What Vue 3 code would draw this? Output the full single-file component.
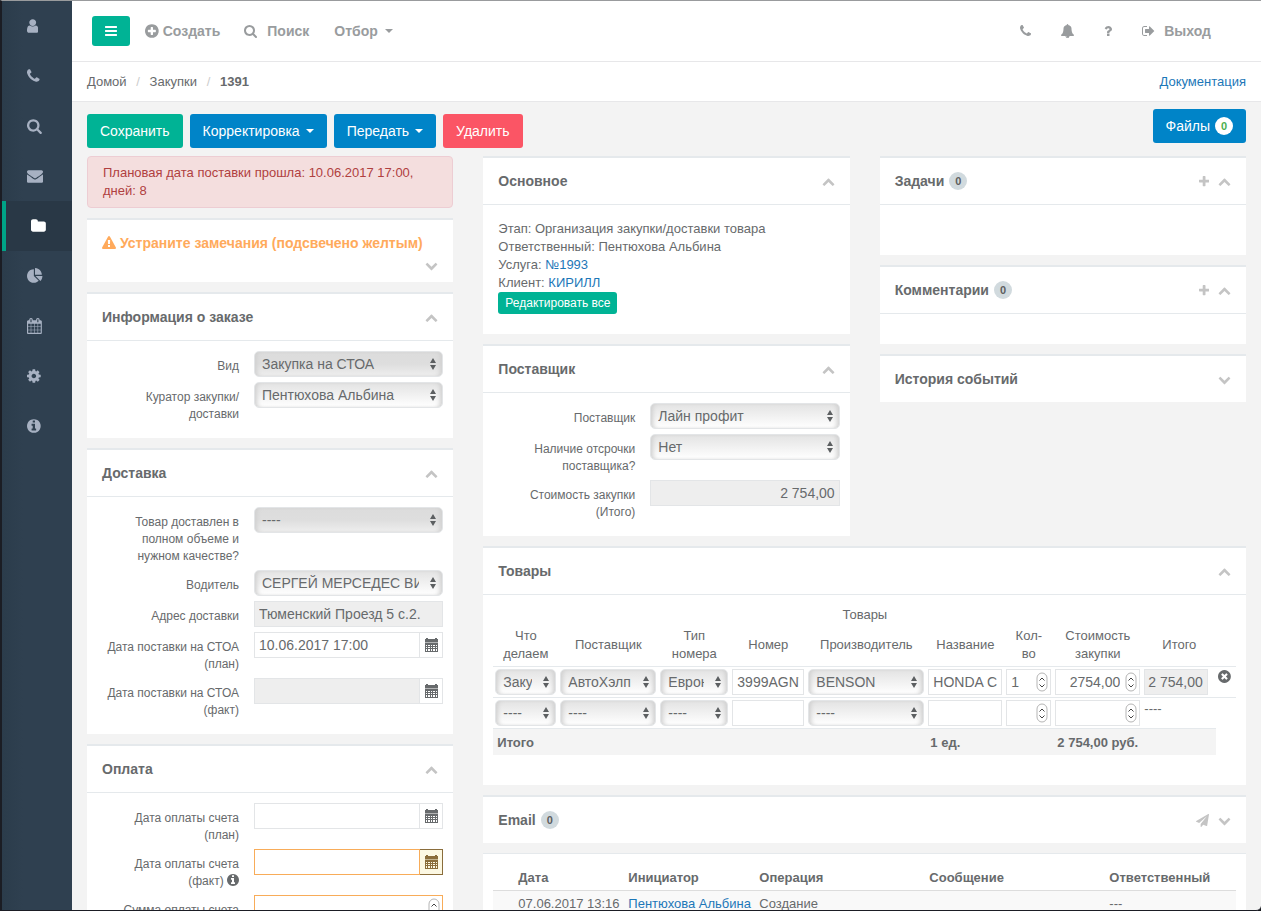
<script setup>
import { h } from 'vue'

const disc = 'M1664 896q0 209-103 385.5t-279.5 279.5-385.5 103-385.5-103-279.5-279.5-103-385.5 103-385.5 279.5-279.5 385.5-103 385.5 103 279.5 279.5 103 385.5z'

// name: [left edge, advance width, path] on a 1792-unit em
const icons = {
  user: [256, 1280, 'M1536 1399q0 109-62.5 187t-150.5 78h-854q-88 0-150.5-78t-62.5-187q0-85 8.5-160.5t31.5-152 58.5-131 94-89 134.5-34.5q131 128 313 128t313-128q76 0 134.5 34.5t94 89 58.5 131 31.5 152 8.5 160.5zm-256-887q0 159-112.5 271.5t-271.5 112.5-271.5-112.5-112.5-271.5 112.5-271.5 271.5-112.5 271.5 112.5 112.5 271.5z'],
  phone: [192, 1408, 'M1600 1240q0 27-10 70.5t-21 68.5q-21 50-122 106-94 51-186 51-27 0-53-3.5t-57.5-12.5-47-14.5-55.5-20.5-49-18q-98-35-175-83-127-79-264-216t-216-264q-48-77-83-175-3-9-18-49t-20.5-55.5-14.5-47-12.5-57.5-3.5-53q0-92 51-186 56-101 106-122 25-11 68.5-21t70.5-10q14 0 21 3 18 6 53 76 11 19 30 54t35 63.5 31 53.5q3 4 17.5 25t21.5 35.5 7 28.5q0 20-28.5 50t-62 55-62 53-28.5 46q0 9 5 22.5t8.5 20.5 14 24 11.5 19q76 137 174 235t235 174q2 1 19 11.5t24 14 20.5 8.5 22.5 5q18 0 46-28.5t53-62 55-62 50-28.5q14 0 28.5 7t35.5 21.5 25 17.5q25 15 53.5 31t63.5 35 54 30q70 35 76 53 3 7 3 21z'],
  search: [64, 1664, 'M1216 832q0-185-131.5-316.5t-316.5-131.5-316.5 131.5-131.5 316.5 131.5 316.5 316.5 131.5 316.5-131.5 131.5-316.5zm512 832q0 52-38 90t-90 38q-54 0-90-38l-343-342q-179 124-399 124-143 0-273.5-55.5t-225-150-150-225-55.5-273.5 55.5-273.5 150-225 225-150 273.5-55.5 273.5 55.5 225 150 150 225 55.5 273.5q0 220-124 399l343 343q37 37 37 90z'],
  envelope: [0, 1792, 'M1792 710v794q0 66-47 113t-113 47h-1472q-66 0-113-47t-47-113v-794q44 49 101 87 362 246 497 345 57 42 92.5 65.5t94.5 48 110 24.5h2q51 0 110-24.5t94.5-48 92.5-65.5q170-123 498-345 57-39 100-87zm0-294q0 79-49 151t-122 123q-376 261-468 325-10 7-42.5 31t-54 38.5-52 32.5-57.5 27-50 9h-2q-23 0-50-9t-57.5-27-52-32.5-54-38.5-42.5-31q-91-64-262-182.5t-205-142.5q-62-42-117-115.5t-55-136.5q0-78 41.5-130t118.5-52h1472q65 0 112.5 47t47.5 113z'],
  folder: [64, 1664, 'M1728 608v704q0 92-66 158t-158 66h-1216q-92 0-158-66t-66-158v-960q0-92 66-158t158-66h320q92 0 158 66t66 158v32h672q92 0 158 66t66 158z'],
  pie: [0, 1792, 'M768 890l546 546q-106 108-247.5 168t-298.5 60q-209 0-385.5-103t-279.5-279.5-103-385.5 103-385.5 279.5-279.5 385.5-103v762zm187 6h773q0 157-60 298.5t-168 247.5zm709-128h-768v-768q209 0 385.5 103t279.5 279.5 103 385.5z'],
  calendar: [64, 1664, 'M192 1664h288v-288h-288v288zm352 0h320v-288h-320v288zm-352-352h288v-320h-288v320zm352 0h320v-320h-320v320zm-352-384h288v-288h-288v288zm736 736h320v-288h-320v288zm-384-736h320v-288h-320v288zm768 736h288v-288h-288v288zm-384-352h320v-320h-320v320zm-352-864v-288q0-13-9.5-22.5t-22.5-9.5h-64q-13 0-22.5 9.5t-9.5 22.5v288q0 13 9.5 22.5t22.5 9.5h64q13 0 22.5-9.5t9.5-22.5zm736 864h288v-320h-288v320zm-384-384h320v-288h-320v288zm384 0h288v-288h-288v288zm32-480v-288q0-13-9.5-22.5t-22.5-9.5h-64q-13 0-22.5 9.5t-9.5 22.5v288q0 13 9.5 22.5t22.5 9.5h64q13 0 22.5-9.5t9.5-22.5zm384-64v1280q0 52-38 90t-90 38h-1408q-52 0-90-38t-38-90v-1280q0-52 38-90t90-38h128v-96q0-66 47-113t113-47h64q66 0 113 47t47 113v96h384v-96q0-66 47-113t113-47h64q66 0 113 47t47 113v96h128q52 0 90 38t38 90z'],
  cog: [128, 1536, 'M1152 896q0-106-75-181t-181-75-181 75-75 181 75 181 181 75 181-75 75-181zm512-109v222q0 12-8 23t-20 13l-185 28q-19 54-39 91 35 50 107 138 10 12 10 25t-9 23q-27 37-99 108t-94 71q-12 0-26-9l-138-108q-44 23-91 38-16 136-29 186-7 28-36 28h-222q-14 0-24.5-8.5t-11.5-21.5l-28-184q-49-16-90-37l-141 107q-10 9-25 9-14 0-25-11-126-114-165-168-7-10-7-23 0-12 8-23 15-21 51-66.5t54-70.5q-27-50-41-99l-183-27q-13-2-21-12.5t-8-23.5v-222q0-12 8-23t19-13l186-28q14-46 39-92-40-57-107-138-10-12-10-24 0-10 9-23 26-36 98.5-107.5t94.5-71.5q13 0 26 10l138 107q44-23 91-38 16-136 29-186 7-28 36-28h222q14 0 24.5 8.5t11.5 21.5l28 184q49 16 90 37l142-107q9-9 24-9 13 0 25 10 129 119 165 170 7 8 7 22 0 12-8 23-15 21-51 66.5t-54 70.5q26 50 41 98l183 28q13 2 21 12.5t8 23.5z'],
  info: [128, 1536, 'M1152 1376v-160q0-14-9-23t-23-9h-96v-512q0-14-9-23t-23-9h-320q-14 0-23 9t-9 23v160q0 14 9 23t23 9h96v320h-96q-14 0-23 9t-9 23v160q0 14 9 23t23 9h448q14 0 23-9t9-23zm-128-896v-160q0-14-9-23t-23-9h-192q-14 0-23 9t-9 23v160q0 14 9 23t23 9h192q14 0 23-9t9-23z' + disc],
  plusCircle: [128, 1536, 'M1344 960v-128q0-26-19-45t-45-19h-256v-256q0-26-19-45t-45-19h-128q-26 0-45 19t-19 45v256h-256q-26 0-45 19t-19 45v128q0 26 19 45t45 19h256v256q0 26 19 45t45 19h128q26 0 45-19t19-45v-256h256q26 0 45-19t19-45z' + disc],
  timesCircle: [128, 1536, 'M1277 1122q0-26-19-45l-181-181 181-181q19-19 19-45 0-27-19-46l-90-90q-19-19-46-19-26 0-45 19l-181 181-181-181q-19-19-45-19-27 0-46 19l-90 90q-19 19-19 46 0 26 19 45l181 181-181 181q-19 19-19 45 0 27 19 46l90 90q19 19 46 19 26 0 45-19l181-181 181 181q19 19 45 19 27 0 46-19l90-90q19-19 19-46z' + disc],
  bell: [64, 1664, 'M912 1696q0-16-16-16-59 0-101.5-42.5t-42.5-101.5q0-16-16-16t-16 16q0 73 51.5 124.5t124.5 51.5q16 0 16-16zm816-288q0 52-38 90t-90 38h-448q0 106-75 181t-181 75-181-75-75-181h-448q-52 0-90-38t-38-90q50-42 91-88t85-119.5 74.5-158.5 50-206 19.5-260q0-152 117-282.5t307-158.5q-8-19-8-39 0-40 28-68t68-28 68 28 28 68q0 20-8 39 190 28 307 158.5t117 282.5q0 139 19.5 260t50 206 74.5 158.5 85 119.5 91 88z'],
  question: [384, 1024, 'M1088 1256v240q0 16-12 28t-28 12h-240q-16 0-28-12t-12-28v-240q0-16 12-28t28-12h240q16 0 28 12t12 28zm316-600q0 54-15.5 101t-35 76.5-55 59.5-57.5 43.5-61 35.5q-41 23-68.5 65t-27.5 67q0 17-12 32.5t-28 15.5h-240q-15 0-25.5-18.5t-10.5-37.5v-45q0-83 65-156.5t143-108.5q59-27 84-56t25-76q0-42-46.5-74t-107.5-32q-65 0-108 29-35 25-107 115-13 16-31 16-12 0-25-8l-164-125q-13-10-15.5-25t5.5-28q160-266 464-266 80 0 161 31t146 83 106 127.5 41 158.5z'],
  signOut: [64, 1664, 'M704 1440q0 4 1 20t.5 26.5-3 23.5-10 19.5-20.5 6.5h-320q-119 0-203.5-84.5t-84.5-203.5v-704q0-119 84.5-203.5t203.5-84.5h320q13 0 22.5 9.5t9.5 22.5q0 4 1 20t.5 26.5-3 23.5-10 19.5-20.5 6.5h-320q-66 0-113 47t-47 113v704q0 66 47 113t113 47h312l11.5 1 11.5 3 8 5.5 7 9 2 13.5zm928-544q0 26-19 45l-544 544q-19 19-45 19t-45-19-19-45v-288h-448q-26 0-45-19t-19-45v-384q0-26 19-45t45-19h448v-288q0-26 19-45t45-19 45 19l544 544q19 19 19 45z'],
  bars: [128, 1536, 'M1664 1344v128q0 26-19 45t-45 19h-1408q-26 0-45-19t-19-45v-128q0-26 19-45t45-19h1408q26 0 45 19t19 45zm0-512v128q0 26-19 45t-45 19h-1408q-26 0-45-19t-19-45v-128q0-26 19-45t45-19h1408q26 0 45 19t19 45zm0-512v128q0 26-19 45t-45 19h-1408q-26 0-45-19t-19-45v-128q0-26 19-45t45-19h1408q26 0 45 19t19 45z'],
  warning: [0, 1792, 'M1024 1375v-190q0-14-9.5-23.5t-22.5-9.5h-192q-13 0-22.5 9.5t-9.5 23.5v190q0 14 9.5 23.5t22.5 9.5h192q13 0 22.5-9.5t9.5-23.5zm-2-374l18-459q0-12-10-19-13-11-24-11h-220q-11 0-24 11-10 7-10 21l17 457q0 10 10 16.5t24 6.5h185q14 0 23.5-6.5t10.5-16.5zm-14-934l768 1408q35 63-2 126-17 29-46.5 46t-63.5 17h-1536q-34 0-63.5-17t-46.5-46q-37-63-2-126l768-1408q17-31 47-49t65-18 65 18 47 49z'],
  up: [0, 1792, 'M1683 1331l-166 165q-19 19-45 19t-45-19l-531-531-531 531q-19 19-45 19t-45-19l-166-165q-19-19-19-45.5t19-45.5l742-741q19-19 45-19t45 19l742 741q19 19 19 45.5t-19 45.5z'],
  down: [0, 1792, 'M1683 808l-742 741q-19 19-45 19t-45-19l-742-741q-19-19-19-45.5t19-45.5l166-165q19-19 45-19t45 19l531 531 531-531q19-19 45-19t45 19l166 165q19 19 19 45.5t-19 45.5z'],
  plus: [192, 1408, 'M1600 736v192q0 40-28 68t-68 28h-416v416q0 40-28 68t-68 28h-192q-40 0-68-28t-28-68v-416h-416q-40 0-68-28t-28-68v-192q0-40 28-68t68-28h416v-416q0-40 28-68t68-28h192q40 0 68 28t28 68v416h416q40 0 68 28t28 68z'],
  plane: [0, 1792, 'M1764 11q33 24 27 64l-256 1536q-5 29-32 45-14 8-31 8-11 0-24-5l-453-185-242 295q-18 23-49 23-13 0-22-4-19-7-30.5-23.5t-11.5-36.5v-349l864-1059-1069 925-395-162q-37-14-40-55-2-40 32-59l1664-960q15-9 32-9 20 0 36 11z'],
}

const Icon = (props) => {
  const [x, w, d] = icons[props.name]
  return h('svg', { class: 'icon', viewBox: `${x} 0 ${w} 1792`, 'aria-hidden': 'true' }, [h('path', { d, 'fill-rule': 'evenodd' })])
}
Icon.props = ['name']

const Picker = (props) =>
  h('span', { class: ['picker', { muted: props.muted }] }, [
    h('select', { id: props.id, 'aria-label': props.label }, [h('option', props.value)]),
    h('svg', { viewBox: '0 0 8 12', 'aria-hidden': 'true' }, [h('path', { d: 'M4 0l3 5H1zM4 12l3-5H1z' })]),
  ])
Picker.props = ['id', 'label', 'value', 'muted']

const Stepper = (props) =>
  h('span', { class: 'stepper' }, [
    h('input', { id: props.id, 'aria-label': props.label, value: props.value, inputmode: 'decimal', class: [props.state, { right: props.right }] }),
    h('svg', { viewBox: '0 0 12 20', 'aria-hidden': 'true' }, [
      h('rect', { x: 1, y: 1, width: 10, height: 18, rx: 5 }),
      h('path', { d: 'M3.5 8.5L6 6l2.5 2.5M3.5 12.5L6 15l2.5-2.5' }),
    ]),
  ])
Stepper.props = ['id', 'label', 'value', 'state', 'right']

const DateInput = (props) =>
  h('span', { class: ['date', props.state] }, [
    h('input', { id: props.id, value: props.value, disabled: props.off }),
    h('button', { type: 'button', 'aria-label': 'Календарь' }, [
      h('svg', { viewBox: '0 0 13 14', 'aria-hidden': 'true' }, [
        h('path', { d: 'M0 1h1V0h2v1h7V0h2v1h1v3H0z' }),
        h('path', { d: 'M0 5h13v9H0zM1 7v1h1V7zM3 7v1h2V7zM6 7v1h1V7zM8 7v1h2V7zM11 7v1h1V7zM1 9v1h1V9zM3 9v1h2V9zM6 9v1h1V9zM8 9v1h2V9zM11 9v1h1V9zM1 11v2h1v-2zM3 11v2h2v-2zM6 11v2h1v-2zM8 11v2h2v-2zM11 11v2h1v-2z', 'fill-rule': 'evenodd' }),
        h('path', { d: 'M0 4h13v1H0z', opacity: '0.5' }),
      ]),
    ]),
  ])
DateInput.props = ['id', 'value', 'off', 'state']

const Field = (props) => {
  const f = props.field
  const control =
    f.kind === 'select' ? h(Picker, { id: f.id, value: f.value, muted: f.muted })
    : f.kind === 'date' ? h(DateInput, { id: f.id, value: f.value, off: f.off, state: f.state })
    : f.kind === 'number' ? h(Stepper, { id: f.id, value: f.value, state: f.state })
    : h('input', { id: f.id, value: f.value, disabled: true, class: { right: f.right } })
  return h('div', { class: 'field' }, [
    h('label', { for: f.id }, [f.label, f.hint ? h(Icon, { name: 'info' }) : null]),
    control,
  ])
}
Field.props = ['field']

const menu = [
  ['user', 'Профиль'], ['phone', 'Звонки'], ['search', 'Поиск'], ['envelope', 'Почта'], ['folder', 'Закупки'],
  ['pie', 'Отчёты'], ['calendar', 'Календарь'], ['cog', 'Настройки'], ['info', 'Справка'],
]

const sections = [
  {
    title: 'Информация о заказе',
    fields: [
      { id: 'kind', label: 'Вид', kind: 'select', value: 'Закупка на СТОА', muted: true },
      { id: 'curator', label: 'Куратор закупки/ доставки', kind: 'select', value: 'Пентюхова Альбина' },
    ],
  },
  {
    title: 'Доставка',
    fields: [
      { id: 'delivered', label: 'Товар доставлен в полном объеме и нужном качестве?', kind: 'select', value: '----', muted: true },
      { id: 'driver', label: 'Водитель', kind: 'select', value: 'СЕРГЕЙ МЕРСЕДЕС ВИТО' },
      { id: 'address', label: 'Адрес доставки', kind: 'text', value: 'Тюменский Проезд 5 с.2.' },
      { id: 'ship-plan', label: 'Дата поставки на СТОА (план)', kind: 'date', value: '10.06.2017 17:00' },
      { id: 'ship-fact', label: 'Дата поставки на СТОА (факт)', kind: 'date', value: '', off: true },
    ],
  },
  {
    title: 'Оплата',
    fields: [
      { id: 'pay-plan', label: 'Дата оплаты счета (план)', kind: 'date', value: '' },
      { id: 'pay-fact', label: 'Дата оплаты счета (факт) ', kind: 'date', value: '', state: 'warn', hint: true },
      { id: 'pay-sum', label: 'Сумма оплаты счета', kind: 'number', value: '', state: 'warn' },
    ],
  },
]

const supplierFields = [
  { id: 'supplier', label: 'Поставщик', kind: 'select', value: 'Лайн профит' },
  { id: 'delay', label: 'Наличие отсрочки поставщика?', kind: 'select', value: 'Нет' },
  { id: 'cost', label: 'Стоимость закупки (Итого)', kind: 'text', value: '2 754,00', right: true },
]

const columns = ['Что делаем', 'Поставщик', 'Тип номера', 'Номер', 'Производитель', 'Название', 'Кол-во', 'Стоимость закупки', 'Итого']
const goods = [
  { action: 'Закупка', supplier: 'АвтоХэлп', type: 'Евроном', number: '3999AGNW', maker: 'BENSON', name: 'HONDA CR-V', count: '1', price: '2754,00', total: '2 754,00' },
  { action: '----', supplier: '----', type: '----', number: '', maker: '----', name: '', count: '', price: '', total: '' },
]
</script>

<template>
  <div class="window">
    <nav class="sidebar" aria-label="Разделы">
      <a v-for="[icon, label] in menu" :key="icon" href="#" :aria-label="label" :class="{ active: icon === 'folder' }">
        <Icon :name="icon" />
      </a>
    </nav>

    <div class="page">
      <header class="topbar">
        <button type="button" class="burger" aria-label="Меню"><Icon name="bars" /></button>
        <a href="#" class="create"><Icon name="plusCircle" />Создать</a>
        <a href="#" class="find"><Icon name="search" />Поиск</a>
        <a href="#" class="filter">Отбор<i class="caret"></i></a>
        <div class="account">
          <a href="#" aria-label="Звонки"><Icon name="phone" /></a>
          <a href="#" aria-label="Уведомления"><Icon name="bell" /></a>
          <a href="#" aria-label="Помощь"><Icon name="question" /></a>
          <a href="#" class="exit"><Icon name="signOut" />Выход</a>
        </div>
      </header>

      <div class="crumbs">
        <a href="#">Домой</a><span>/</span><a href="#">Закупки</a><span>/</span><strong>1391</strong>
        <a href="#" class="docs">Документация</a>
      </div>

      <main>
        <div class="actions">
          <button type="button" class="btn green">Сохранить</button>
          <button type="button" class="btn blue">Корректировка<i class="caret"></i></button>
          <button type="button" class="btn blue">Передать<i class="caret"></i></button>
          <button type="button" class="btn red">Удалить</button>
          <button type="button" class="btn blue files">Файлы<b class="badge">0</b></button>
        </div>

        <div class="columns">
          <div class="stack">
            <div class="alert" role="alert">Плановая дата поставки прошла: 10.06.2017 17:00, дней: 8</div>
            <section class="box notice">
              <h2><Icon name="warning" />Устраните замечания (подсвечено желтым)</h2>
              <button type="button" class="tool" aria-label="Развернуть"><Icon name="down" /></button>
            </section>
            <section v-for="s in sections" :key="s.title" class="box">
              <div class="head">
                <h2>{{ s.title }}</h2>
                <button type="button" class="tool" aria-label="Свернуть"><Icon name="up" /></button>
              </div>
              <div class="body form">
                <Field v-for="f in s.fields" :key="f.id" :field="f" />
              </div>
            </section>
          </div>

          <div class="wide">
            <div class="pair">
              <div class="stack">
                <section class="box">
                  <div class="head">
                    <h2>Основное</h2>
                    <button type="button" class="tool" aria-label="Свернуть"><Icon name="up" /></button>
                  </div>
                  <div class="body summary">
                    <div>Этап: Организация закупки/доставки товара</div>
                    <div>Ответственный: Пентюхова Альбина</div>
                    <div>Услуга: <a href="#">№1993</a></div>
                    <div>Клиент: <a href="#">КИРИЛЛ</a></div>
                    <button type="button" class="edit">Редактировать все</button>
                  </div>
                </section>
                <section class="box">
                  <div class="head">
                    <h2>Поставщик</h2>
                    <button type="button" class="tool" aria-label="Свернуть"><Icon name="up" /></button>
                  </div>
                  <div class="body form">
                    <Field v-for="f in supplierFields" :key="f.id" :field="f" />
                  </div>
                </section>
              </div>

              <div class="stack">
                <section class="box">
                  <div class="head">
                    <h2>Задачи<b class="badge">0</b></h2>
                    <button type="button" class="tool" aria-label="Добавить"><Icon name="plus" /></button>
                    <button type="button" class="tool" aria-label="Свернуть"><Icon name="up" /></button>
                  </div>
                  <div class="body tasks"></div>
                </section>
                <section class="box">
                  <div class="head">
                    <h2>Комментарии<b class="badge">0</b></h2>
                    <button type="button" class="tool" aria-label="Добавить"><Icon name="plus" /></button>
                    <button type="button" class="tool" aria-label="Свернуть"><Icon name="up" /></button>
                  </div>
                  <div class="body comments"></div>
                </section>
                <section class="box">
                  <div class="head">
                    <h2>История событий</h2>
                    <button type="button" class="tool" aria-label="Развернуть"><Icon name="down" /></button>
                  </div>
                </section>
              </div>
            </div>

            <section class="box">
              <div class="head">
                <h2>Товары</h2>
                <button type="button" class="tool" aria-label="Свернуть"><Icon name="up" /></button>
              </div>
              <div class="body goods">
                <table>
                  <colgroup>
                    <col class="w65"><col class="w100"><col class="w72"><col class="w76"><col class="w120">
                    <col class="w78"><col class="w49"><col class="w89"><col class="w74"><col class="w20">
                  </colgroup>
                  <thead>
                    <tr class="group"><th colspan="10">Товары</th></tr>
                    <tr><th v-for="c in columns" :key="c">{{ c }}</th><td></td></tr>
                  </thead>
                  <tbody>
                    <tr v-for="(g, i) in goods" :key="i">
                      <td><Picker :value="g.action" label="Что делаем" /></td>
                      <td><Picker :value="g.supplier" label="Поставщик" /></td>
                      <td><Picker :value="g.type" label="Тип номера" /></td>
                      <td><input :value="g.number" aria-label="Номер"></td>
                      <td><Picker :value="g.maker" label="Производитель" /></td>
                      <td><input :value="g.name" aria-label="Название"></td>
                      <td><Stepper :value="g.count" label="Кол-во" /></td>
                      <td><Stepper :value="g.price" label="Стоимость закупки" :right="true" /></td>
                      <td class="total">
                        <input v-if="g.total" :value="g.total" aria-label="Итого" disabled>
                        <template v-else>----</template>
                      </td>
                      <td class="remove" :class="{ bare: !g.total }">
                        <button v-if="g.total" type="button" aria-label="Удалить строку"><Icon name="timesCircle" /></button>
                      </td>
                    </tr>
                  </tbody>
                  <tfoot>
                    <tr><td colspan="5">Итого</td><td colspan="2">1 ед.</td><td colspan="2">2 754,00 руб.</td></tr>
                  </tfoot>
                </table>
              </div>
            </section>

            <section class="box">
              <div class="head">
                <h2>Email<b class="badge">0</b></h2>
                <button type="button" class="tool" aria-label="Написать письмо"><Icon name="plane" /></button>
                <button type="button" class="tool" aria-label="Развернуть"><Icon name="down" /></button>
              </div>
            </section>

            <section class="box log">
              <table>
                <colgroup><col class="w20"><col class="w110"><col class="w131"><col class="w170"><col class="w180"><col class="w132"></colgroup>
                <thead>
                  <tr><td></td><th>Дата</th><th>Инициатор</th><th>Операция</th><th>Сообщение</th><th>Ответственный</th></tr>
                </thead>
                <tbody>
                  <tr><td></td><td>07.06.2017 13:16</td><td><a href="#">Пентюхова Альбина</a></td><td>Создание</td><td></td><td>---</td></tr>
                </tbody>
              </table>
            </section>
          </div>
        </div>
      </main>
    </div>
  </div>
</template>

<style>
body {
  margin: 0;
  background: #15171c;
}
</style>

<style scoped>
.window {
  display: flex;
  height: 100vh;
  box-sizing: border-box;
  overflow: hidden;
  border: solid #1b1d24;
  border-width: 1px 0 1px 2px;
  border-top-color: #999b9d;
  border-bottom-right-radius: 5px;
  background: #f3f3f3;
  color: #676a6c;
  font: 13px/18px "Liberation Sans", Arial, sans-serif;
}
a {
  color: #1c77b8;
  text-decoration: none;
}
.window :deep(button),
.window :deep(input),
.window :deep(select) {
  font-family: inherit;
  box-sizing: border-box;
}
.window :deep(.icon) {
  height: 1em;
  fill: currentColor;
  flex: none;
}

/* Sidebar */
.sidebar {
  width: 70px;
  flex: none;
  background: linear-gradient(90deg, #2b3c4b, #2f4050 30%);
}
.sidebar a {
  display: flex;
  align-items: center;
  height: 50px;
  padding-left: 25px;
  color: #a7b1c2;
  font-size: 16px;
}
.sidebar a.active {
  border-left: 4px solid #00a487;
  background: #293846;
  color: #fff;
}

/* Top bar */
.page {
  flex: 1;
  min-width: 0;
  display: flex;
  flex-direction: column;
}
.topbar {
  display: flex;
  align-items: center;
  height: 60px;
  flex: none;
  padding: 0 50px 0 20px;
  border-bottom: 1px solid #e7e7e9;
  background: #fff;
  font-size: 14px;
  font-weight: bold;
}
.topbar a {
  display: flex;
  align-items: center;
  color: #999c9e;
}
.burger {
  display: grid;
  place-items: center;
  width: 38px;
  height: 30px;
  padding: 0;
  border: 0;
  border-radius: 3px;
  background: #00b395;
  color: #fff;
  font-size: 14px;
}
.create {
  margin-left: 15px;
  gap: 4px;
}
.create .icon {
  font-size: 16px;
}
.find {
  margin-left: 24px;
  gap: 10px;
}
.filter {
  margin-left: 25px;
}
.caret {
  display: inline-block;
  border: 4px solid transparent;
  border-top-color: currentColor;
  border-bottom: 0;
  vertical-align: middle;
}
.filter .caret {
  margin-left: 7px;
}
.account {
  display: flex;
  gap: 30px;
  margin-left: auto;
}
.exit {
  gap: 9px;
}

/* Breadcrumbs */
.crumbs {
  display: flex;
  align-items: center;
  height: 39px;
  flex: none;
  padding: 0 15px;
  border-bottom: 1px solid #e7e7e9;
  background: #fff;
}
.crumbs a {
  color: #676a6c;
}
.crumbs span {
  width: 23px;
  text-align: center;
  color: #ccc;
}
.crumbs .docs {
  margin-left: auto;
  color: #1c77b8;
}

main {
  flex: 1;
  min-height: 0;
  overflow-y: auto;
  scrollbar-width: none;
  padding: 0 15px;
}

/* Action buttons */
.actions {
  display: flex;
  align-items: flex-start;
  gap: 7px;
  padding-top: 12px;
  height: 42px;
}
.btn {
  display: flex;
  align-items: center;
  height: 34px;
  padding: 0 13px;
  border: 0;
  border-radius: 3px;
  color: #fff;
  font-size: 14px;
}
.btn .caret {
  margin-left: 6px;
}
.green { background: #00b395; }
.blue { background: #0084c8; }
.red { background: #fb5565; }
.files {
  margin: -5px 0 0 auto;
}
.badge {
  display: inline-grid;
  place-items: center;
  width: 18px;
  height: 18px;
  border-radius: 9px;
  background: #d1dade;
  color: #5e5e5e;
  font-size: 11px;
  line-height: 18px;
  margin-left: 5px;
}
.files .badge {
  background: #fff;
  color: #4caf50;
}

/* Boxes */
.columns {
  display: grid;
  grid-template-columns: repeat(3, minmax(0, 1fr));
  gap: 30px;
}
.wide {
  grid-column: span 2;
}
.pair {
  display: grid;
  grid-template-columns: repeat(2, minmax(0, 1fr));
  gap: 30px;
}
.pair .stack {
  min-width: 0;
}
.alert {
  margin-bottom: 10px;
  padding: 7px 15px;
  border: 1px solid #edcdd3;
  border-radius: 4px;
  background: #f4dede;
  color: #b04040;
}
.box {
  margin-bottom: 10px;
  border-top: 2px solid #e5e9ec;
  background: #fff;
}
.head {
  display: flex;
  align-items: center;
  gap: 9px;
  height: 46px;
  padding: 0 15px;
}
h2 {
  display: flex;
  align-items: center;
  flex: 1;
  margin: 0;
  font-size: 14px;
  line-height: 18px;
}
.tool {
  display: flex;
  padding: 0;
  border: 0;
  background: none;
  color: #c4c4c4;
  font-size: 13px;
}
.body {
  border-top: 1px solid #e5e9ec;
}
.notice {
  padding: 14px 15px 10px;
}
.notice h2 {
  gap: 4px;
  color: #ffaa5c;
}
.notice .tool {
  margin: 7px 0 0 auto;
}
.tasks { height: 50px; }
.comments { height: 30px; }
.summary {
  padding: 15px 15px 20px;
}
.edit {
  display: block;
  height: 22px;
  padding: 0 7px;
  border: 0;
  border-radius: 3px;
  background: #00b395;
  color: #fff;
  font-size: 12px;
}

/* Form controls */
.form {
  padding: 10px;
}
.form :deep(.field) {
  display: grid;
  grid-template-columns: minmax(0, 3fr) minmax(0, 4fr);
  column-gap: 15px;
  align-items: start;
  margin-bottom: 5px;
}
.form :deep(label) {
  padding-top: 7px;
  font-size: 12px;
  line-height: 17px;
  text-align: right;
}
.form :deep(label .icon) {
  font-size: 14px;
  line-height: 14px;
  vertical-align: -2px;
}
.window :deep(input) {
  width: 100%;
  height: 26px;
  padding: 0 4px;
  border: 1px solid #e3e5e7;
  border-radius: 0;
  background: #fff;
  color: #676a6c;
  font-size: 14px;
}
.window :deep(input:disabled) {
  background: #eee;
  -webkit-text-fill-color: #676a6c;
}
.window :deep(input.right) {
  text-align: right;
}
.window :deep(input.warn) {
  border-color: #f8ac59;
}
.window :deep(.picker),
.window :deep(.stepper) {
  display: block;
  position: relative;
}
.window :deep(.picker select) {
  display: block;
  appearance: none;
  width: 100%;
  height: 26px;
  padding: 0 23px 0 7px;
  border: 1px solid #e3e5e7;
  border-radius: 5px;
  background: linear-gradient(#e3e3e3, #fff);
  box-shadow: inset 4px 0 4px -2px #d0d0d0, inset -4px 0 4px -2px #d0d0d0;
  color: #676a6c;
  font-size: 14px;
}
.window :deep(.picker.muted select) {
  background: linear-gradient(#dcdcdc, #dedede 50%, #eee);
}
.window :deep(.picker svg) {
  position: absolute;
  top: 7px;
  right: 6px;
  width: 8px;
  height: 12px;
  fill: #5c5f61;
  pointer-events: none;
}
.window :deep(.stepper svg) {
  position: absolute;
  top: 3px;
  right: 3px;
  width: 12px;
  height: 20px;
  fill: none;
  stroke: #444;
  pointer-events: none;
}
.window :deep(.stepper rect) {
  fill: #fff;
  stroke: #b5b5b5;
}
.window :deep(.stepper input.right) {
  padding-right: 19px;
}
.window :deep(.date) {
  display: flex;
}
.window :deep(.date input) {
  flex: 1;
  min-width: 0;
}
.window :deep(.date button) {
  display: grid;
  place-items: center;
  width: 23px;
  height: 26px;
  padding: 0;
  border: 1px solid #e3e5e7;
  border-left: 0;
  background: #fff;
  color: #676a6c;
}
.window :deep(.date svg) {
  width: 13px;
  height: 14px;
  fill: currentColor;
}
.window :deep(.date.warn input) {
  border-color: #f8ac59;
}
.window :deep(.date.warn button) {
  border-color: #8a6d3b;
  background: #fcf8e3;
  color: #8a6d3b;
}

/* Tables */
table {
  width: 100%;
  table-layout: fixed;
  border-collapse: separate;
  border-spacing: 0;
}
.w20 { width: 20px; }
.w49 { width: 49px; }
.w65 { width: 65px; }
.w72 { width: 72px; }
.w74 { width: 74px; }
.w76 { width: 76px; }
.w78 { width: 78px; }
.w89 { width: 89px; }
.w100 { width: 100px; }
.w110 { width: 110px; }
.w120 { width: 120px; }
.w131 { width: 131px; }
.w132 { width: 132px; }
.w170 { width: 170px; }
.w180 { width: 180px; }
.goods {
  padding: 10px 10px 30px;
}
.goods th {
  padding: 2px 6px 3px;
  font-weight: normal;
}
.goods .group th {
  padding: 1px 0;
}
.goods tbody td {
  padding: 2px;
  border-top: 1px solid #e5e9ec;
  vertical-align: top;
}
.goods .total {
  padding-right: 8px;
}
.goods .total input {
  padding: 0 3px;
}
.remove button {
  display: flex;
  padding: 0;
  border: 0;
  background: none;
  color: #676a6c;
  font-size: 15px;
}
.goods tfoot td {
  padding: 5px 4px 3px;
  border-top: 1px solid #e5e9ec;
  background: #f4f4f4;
  font-weight: bold;
}
.log {
  padding: 10px;
  border-top-width: 1px;
}
.log th,
.log thead td {
  padding: 5px 5px 3px;
  border-bottom: 1px solid #ddd;
  text-align: left;
}
.log tbody td {
  padding: 4px 5px;
  background: #f9f9f9;
  white-space: nowrap;
}
</style>
